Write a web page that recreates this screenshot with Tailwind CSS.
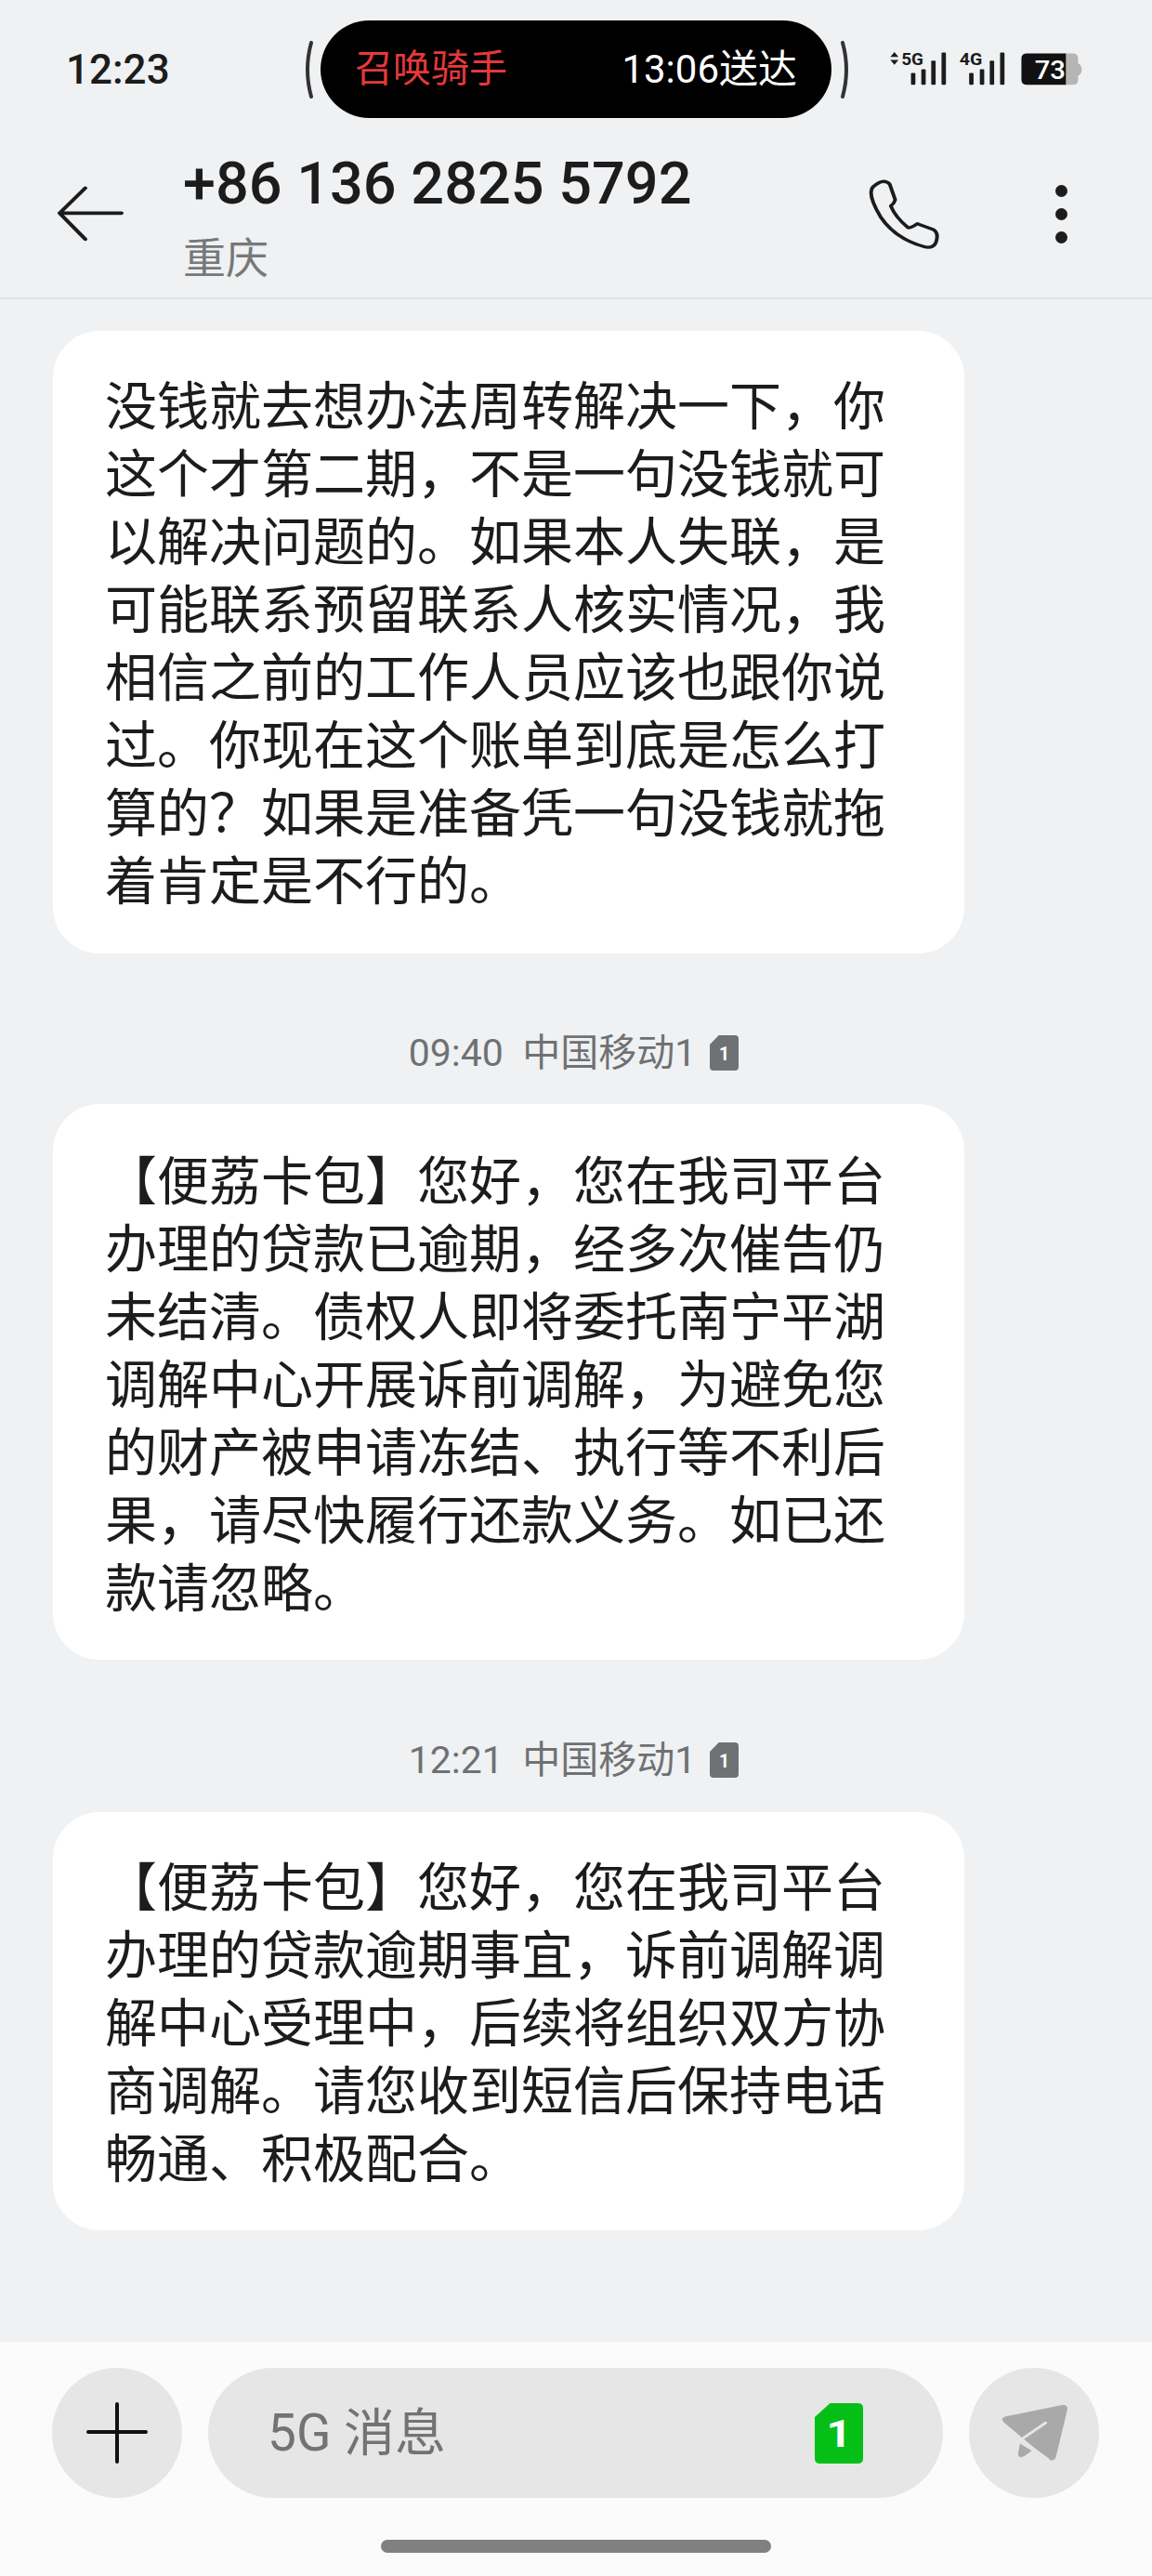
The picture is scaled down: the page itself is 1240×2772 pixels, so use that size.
<!DOCTYPE html>
<html lang="zh-CN">
<head>
    <meta charset="UTF-8">
    <meta name="viewport" content="width=device-width, initial-scale=1.0">
    <title>短信</title>
    <script src="https://cdn.jsdelivr.net/npm/@tailwindcss/browser@4"></script>
</head>
<body class="bg-[#eff1f3]">
    <div class="w-[1240px] h-[2772px] flex flex-col overflow-hidden font-['Roboto','Noto_Sans_CJK_SC',sans-serif]">
        <!-- Status bar -->
        <div class="h-[150px] shrink-0 pt-[22px] flex items-start">
            <div class="w-[326px] h-[105px] pl-[71px] flex items-center text-[44px] font-medium text-[#1c1c1c]">12:23</div>
            <div class="w-[19px] h-[105px] pt-[22px]">
                <svg width="12" height="62" viewBox="0 0 12 62" fill="none"><path d="M9 2 Q1 31 9 60" stroke="#333" stroke-width="4" stroke-linecap="round"/></svg>
            </div>
            <div class="w-[550px] h-[105px] bg-black rounded-full flex items-center justify-between pl-[37px] pr-[37px]">
                <span class="text-[41px] text-[#e5393a]">召唤骑手</span>
                <span class="text-[42px] text-white">13:06送达</span>
            </div>
            <div class="w-[61px] h-[105px] pl-[9px] pt-[22px]">
                <svg width="12" height="62" viewBox="0 0 12 62" fill="none"><path d="M3 2 Q11 31 3 60" stroke="#333" stroke-width="4" stroke-linecap="round"/></svg>
            </div>
            <!-- signal + battery -->
            <svg class="mt-[23px]" width="210" height="48" viewBox="850 135 530 145" preserveAspectRatio="none">
                <path d="M867 168 L878 184 H856 Z M867 210 L878 194 H856 Z" fill="#1c1c1c"/>
                <text x="886" y="210" font-family="Roboto" font-weight="700" font-size="56" fill="#1c1c1c" textLength="60" lengthAdjust="spacingAndGlyphs">5G</text>
                <g fill="#1c1c1c">
                    <rect x="912" y="236" width="12" height="39" rx="3"/>
                    <rect x="940" y="224" width="12" height="51" rx="3"/>
                    <rect x="967" y="196" width="12" height="79" rx="3"/>
                    <rect x="995" y="170" width="12" height="105" rx="3"/>
                    <rect x="1070" y="236" width="12" height="39" rx="3"/>
                    <rect x="1099" y="224" width="12" height="51" rx="3"/>
                    <rect x="1126" y="196" width="12" height="79" rx="3"/>
                    <rect x="1154" y="170" width="12" height="105" rx="3"/>
                </g>
                <text x="1044" y="210" font-family="Roboto" font-weight="700" font-size="56" fill="#1c1c1c" textLength="62" lengthAdjust="spacingAndGlyphs">4G</text>
                <path d="M1333 173 H1352 Q1366 173 1366 190 V205 Q1376 210 1376 225 Q1376 240 1366 245 V258 Q1366 275 1352 275 H1333 Z" fill="#b5b5b5"/>
                <path d="M1333 173 H1228 Q1212 173 1212 189 V259 Q1212 275 1228 275 H1333 Z" fill="#111"/>
                <text x="1248" y="256" font-family="Roboto" font-weight="500" font-size="84" fill="#fff" textLength="84" lengthAdjust="spacingAndGlyphs">73</text>
            </svg>
        </div>

        <!-- Contact header -->
        <div class="h-[172px] shrink-0 border-b-2 border-[#dfe1e3] flex items-start">
            <div class="w-[197px] shrink-0 pl-[61px] pt-[50px]">
                <svg width="75" height="60" viewBox="155 600 190 180" preserveAspectRatio="none" fill="none" stroke="#1c1c1c" stroke-width="11" stroke-linecap="round" stroke-linejoin="round"><path d="M332 688 H163 M233 607 L163 688 L233 772"/></svg>
            </div>
            <div class="w-[735px] shrink-0 pt-[16px]">
                <div class="text-[63px] leading-[64px] font-medium text-[#1c1c1c]">+86 136 2825 5792</div>
                <div class="text-[46px] leading-[54px] mt-[21px] text-[#76787a]">重庆</div>
            </div>
            <div class="pt-[40px]">
                <svg width="83" height="80" viewBox="790 570 210 240" preserveAspectRatio="none" fill="none" stroke="#1c1c1c" stroke-width="10" stroke-linejoin="round"><path d="M815 598 Q840 575 855 595 L870 645 Q868 655 858 665 Q870 700 905 735 Q915 735 930 722 L975 742 Q990 755 980 785 Q970 805 945 795 Q870 770 830 700 Q800 640 805 615 Q806 605 815 598 Z"/></svg>
            </div>
            <div class="ml-[121px] pt-[49px] flex flex-col gap-[12px]">
                <span class="block w-[13px] h-[13px] rounded-full bg-[#1c1c1c]"></span>
                <span class="block w-[13px] h-[13px] rounded-full bg-[#1c1c1c]"></span>
                <span class="block w-[13px] h-[13px] rounded-full bg-[#1c1c1c]"></span>
            </div>
        </div>

        <!-- Messages -->
        <div class="flex-1 pt-[34px] flex flex-col text-[56px] leading-[73px] text-[#1c1c1c]">
            <div class="ml-[57px] w-[981px] h-[670px] bg-white rounded-[50px] pl-[56px] pt-[46px] whitespace-nowrap">
                没钱就去想办法周转解决一下，你<br>这个才第二期，不是一句没钱就可<br>以解决问题的。如果本人失联，是<br>可能联系预留联系人核实情况，我<br>相信之前的工作人员应该也跟你说<br>过。你现在这个账单到底是怎么打<br>算的？如果是准备凭一句没钱就拖<br>着肯定是不行的。
            </div>
            <div class="h-[162px] flex items-start justify-center gap-[15px] text-[41px] leading-[54px] text-[#6f7173] pt-[80px] pr-[5px]">
                <span>09:40&nbsp; 中国移动1</span>
                <svg class="mt-[8px]" width="31" height="38" viewBox="0 0 32 38" preserveAspectRatio="none"><path d="M10 0 H28 Q32 0 32 4 V34 Q32 38 28 38 H4 Q0 38 0 34 V10 Z" fill="#6f7173"/><text x="16" y="27" text-anchor="middle" font-family="Roboto" font-weight="700" font-size="20" fill="#fff">1</text></svg>
            </div>
            <div class="ml-[57px] w-[981px] h-[598px] bg-white rounded-[50px] pl-[56px] pt-[48px] whitespace-nowrap">
                【便荔卡包】您好，您在我司平台<br>办理的贷款已逾期，经多次催告仍<br>未结清。债权人即将委托南宁平湖<br>调解中心开展诉前调解，为避免您<br>的财产被申请冻结、执行等不利后<br>果，请尽快履行还款义务。如已还<br>款请忽略。
            </div>
            <div class="h-[164px] flex items-start justify-center gap-[15px] text-[41px] leading-[54px] text-[#6f7173] pt-[81px] pr-[5px]">
                <span>12:21&nbsp; 中国移动1</span>
                <svg class="mt-[8px]" width="31" height="38" viewBox="0 0 32 38" preserveAspectRatio="none"><path d="M10 0 H28 Q32 0 32 4 V34 Q32 38 28 38 H4 Q0 38 0 34 V10 Z" fill="#6f7173"/><text x="16" y="27" text-anchor="middle" font-family="Roboto" font-weight="700" font-size="20" fill="#fff">1</text></svg>
            </div>
            <div class="ml-[57px] w-[981px] h-[450px] bg-white rounded-[50px] pl-[56px] pt-[46px] whitespace-nowrap">
                【便荔卡包】您好，您在我司平台<br>办理的贷款逾期事宜，诉前调解调<br>解中心受理中，后续将组织双方协<br>商调解。请您收到短信后保持电话<br>畅通、积极配合。
            </div>
        </div>

        <!-- Input bar -->
        <div class="h-[252px] shrink-0 bg-[#fbfbfb] pt-[28px] flex flex-col">
            <div class="flex items-start pl-[56px] gap-[28px]">
                <div class="w-[140px] h-[140px] rounded-full bg-[#e6e6e6] flex items-center justify-center">
                    <svg width="66" height="66" viewBox="0 0 66 66" stroke="#111" stroke-width="4" stroke-linecap="round"><path d="M2 32 H64 M33 2 V64"/></svg>
                </div>
                <div class="w-[791px] h-[140px] rounded-full bg-[#e6e6e6] flex items-center pl-[64px] pr-[86px] justify-between">
                    <span class="text-[55px] text-[#737373]">5G 消息</span>
                    <svg width="52" height="65" viewBox="0 0 44 65" preserveAspectRatio="none"><path d="M14 0 H39 Q44 0 44 5 V60 Q44 65 39 65 H5 Q0 65 0 60 V15 Z" fill="#05bf17"/><text x="22" y="47" text-anchor="middle" font-family="Roboto" font-weight="700" font-size="40" fill="#fff">1</text></svg>
                </div>
                <div class="w-[140px] h-[140px] rounded-full bg-[#e6e6e6] flex items-center justify-center">
                    <svg width="73" height="62" viewBox="1160 320 185 185" preserveAspectRatio="none" fill="#a9a9a9">
                        <path d="M1172 360 L1328 323 Q1344 321 1342 338 L1311 490 Q1306 506 1290 498 L1170 380 Q1158 366 1172 360 Z"/>
                        <path d="M1213 447 L1245 470 L1224 488 Q1207 495 1208 480 Z"/>
                        <path d="M1283 380 L1216 434 L1290 498" fill="none" stroke="#e6e6e6" stroke-width="8" stroke-linecap="round"/>
                    </svg>
                </div>
            </div>
            <div class="mt-[45px] ml-[410px] w-[420px] h-[14px] rounded-full bg-[#808080]"></div>
        </div>
    </div>
</body>
</html>
